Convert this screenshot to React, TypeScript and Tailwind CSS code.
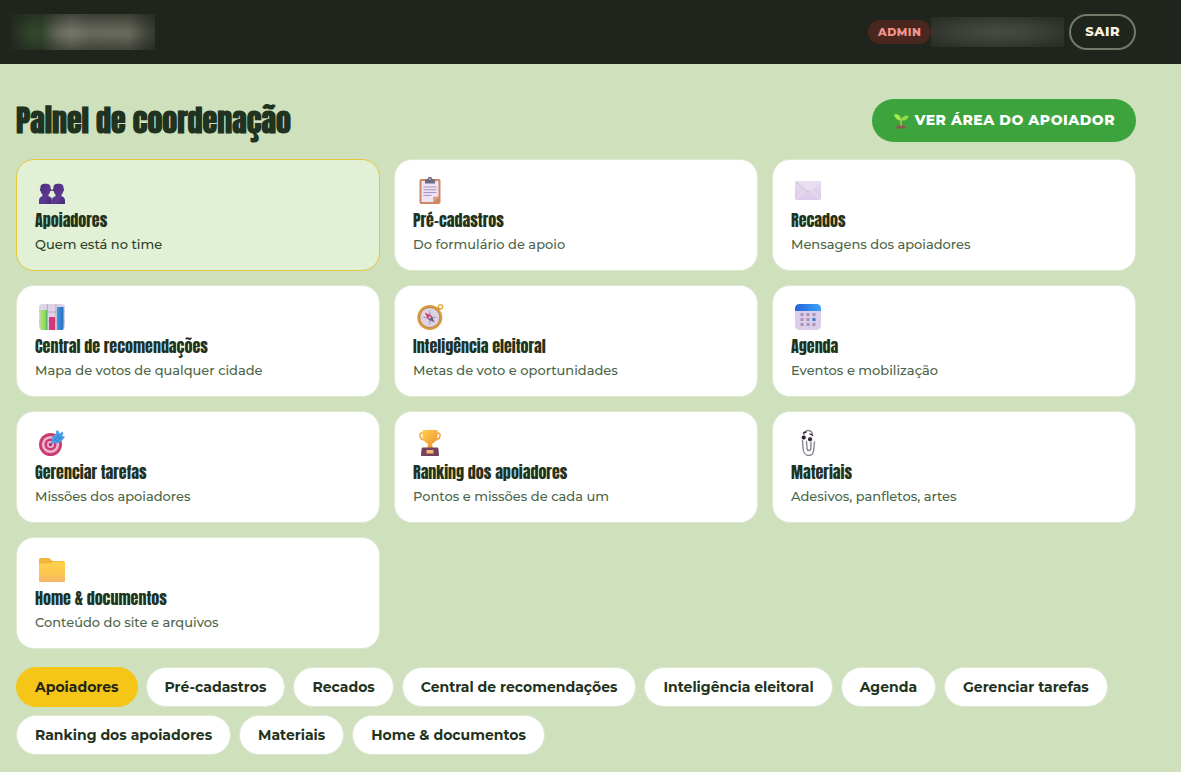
import React, { useState } from 'react';
import clsx from 'clsx';

interface Section {
  id: string;
  title: string;
  description: string;
  icon: React.ReactNode;
}

const PeopleIcon = () => (
  <svg viewBox="0 0 28 28" className="w-7 h-7" aria-hidden="true">
    <defs>
      <linearGradient id="people" x1="0" y1="0" x2="1" y2="1">
        <stop offset="0" stopColor="#4b2f78" />
        <stop offset="0.6" stopColor="#5d3894" />
        <stop offset="1" stopColor="#432a6c" />
      </linearGradient>
    </defs>
    <g fill="url(#people)">
      <path d="M2.400 12.500C2.200 8.800 4 7.800 7.500 7.800s5.300 1 5.100 4.700c.9.200.8 2.500-.3 2.800-.3 1.500-.9 2.600-1.800 3.300v1.600c2.200.5 3.500 2 3.500 4.300v3.500H1v-3.500c0-2.300 1.300-3.800 3.500-4.300v-1.600c-.9-.7-1.500-1.800-1.800-3.300-1-.3-1.200-2.600-.3-2.800z" />
      <path d="M15.400 12.500c-.2-3.700 1.600-4.700 5.100-4.700s5.300 1 5.100 4.700c.9.200.8 2.500-.3 2.800-.3 1.500-.9 2.600-1.800 3.300v1.600c2.200.5 3.500 2 3.500 4.300v3.500H14v-3.500c0-2.300 1.300-3.800 3.500-4.300v-1.600c-.9-.7-1.500-1.800-1.800-3.300-1-.3-1.200-2.600-.3-2.800z" />
    </g>
    <path d="M12 14.200h4" stroke="#4b2f78" strokeWidth="1" />
    <path d="M13.800 27.500v-4c0-1 .3-1.800.8-2.500" fill="none" stroke="#7a58a8" strokeWidth="0.600" />
  </svg>
);

const ClipboardIcon = () => (
  <svg viewBox="0 0 28 28" className="w-7 h-7" aria-hidden="true">
    <rect x="3.500" y="3" width="21" height="25" rx="1.800" fill="#cf8663" />
    <path d="M5.500 5h17v15.500l-5.500 5.500H5.500z" fill="#efe3f6" />
    <path d="M22.500 20.500 17 26v-4a1.500 1.500 0 0 1 1.500-1.500z" fill="#dca184" />
    <path d="M9 7.500V4.600C9 3.700 9.700 3.200 11 3.200c.4 0 .8-.3.900-1C12.200 1.300 13 1 14 1s1.800.3 2.100 1.200c.1.700.5 1 .9 1 1.300 0 2 .5 2 1.400v2.900z" fill="#716a80" />
    <circle cx="14" cy="3" r="0.700" fill="#efe3f6" />
    <path d="M7.500 11h13M7.500 13.800h13M7.500 16.600h13M7.500 19.400h8" stroke="#a592c0" strokeWidth="1" />
  </svg>
);

const EnvelopeIcon = () => (
  <svg viewBox="0 0 28 28" className="w-7 h-7" aria-hidden="true">
    <defs>
      <linearGradient id="envelope" x1="0" y1="0" x2="0" y2="1">
        <stop offset="0" stopColor="#e7dced" />
        <stop offset="1" stopColor="#dcc9ea" />
      </linearGradient>
    </defs>
    <rect x="1" y="5" width="26" height="19" rx="1.500" fill="url(#envelope)" />
    <path d="M1.500 23.500 11 14.500M26.500 23.500 17 14.500" stroke="#f2e9f6" strokeWidth="0.900" />
    <path d="M1.500 5.500 12.300 14.700c1 .8 2.400.8 3.400 0L26.500 5.500" fill="#e9dff0" stroke="#c6b3d2" strokeWidth="0.800" />
    <path d="M16 14.300 26.500 5.500" stroke="#f6eff9" strokeWidth="0.900" />
  </svg>
);

const ChartIcon = () => (
  <svg viewBox="0 0 28 28" className="w-7 h-7" aria-hidden="true">
    <defs>
      <linearGradient id="barGreen" x1="0" y1="0" x2="1" y2="0">
        <stop offset="0" stopColor="#a8e55a" />
        <stop offset="0.700" stopColor="#8fdb60" />
        <stop offset="1" stopColor="#4fae68" />
      </linearGradient>
      <linearGradient id="barBlue" x1="0" y1="0" x2="1" y2="0">
        <stop offset="0" stopColor="#3a9bea" />
        <stop offset="1" stopColor="#2c67b9" />
      </linearGradient>
    </defs>
    <rect x="1" y="2" width="26" height="26" rx="3.500" fill="#ddd3e6" />
    <path d="M1 10h26M1 19h26M9.500 2v26M18 2v26" stroke="#b3a7c0" strokeWidth="0.900" />
    <path d="M2.500 8h6.500v20H4.500c-1.300 0-2-.7-2-2z" fill="url(#barGreen)" />
    <rect x="11" y="15" width="6" height="13" fill="#d83777" />
    <path d="M19 5h6.500v21c0 1.300-.7 2-2 2H19z" fill="url(#barBlue)" />
  </svg>
);

const CompassIcon = () => (
  <svg viewBox="0 0 28 28" className="w-7 h-7" aria-hidden="true">
    <circle cx="24.500" cy="4.800" r="2.200" fill="none" stroke="#e5a83b" strokeWidth="1.300" />
    <path d="m20 9 3-3" stroke="#c98532" strokeWidth="2.500" />
    <circle cx="13.800" cy="15.500" r="12.500" fill="#d99b3e" />
    <circle cx="13.800" cy="15.500" r="10" fill="#ddd3e5" stroke="#b47b43" strokeWidth="0.800" />
    <path d="m13.800 7 1.200 7.200 7.200 1.300-7.200 1.300-1.200 7.200-1.200-7.200-7.200-1.300 7.200-1.300z" fill="#a9a0c0" />
    <path d="m8.800 10.500 6.700 3.300-3.400 3.400z" fill="#d63b6a" />
    <path d="m18.800 20.500-6.700-3.300 3.400-3.400z" fill="#6b6076" />
    <circle cx="13.800" cy="15.500" r="1" fill="#e9e0f0" />
  </svg>
);

const CalendarIcon = () => (
  <svg viewBox="0 0 28 28" className="w-7 h-7" aria-hidden="true">
    <defs>
      <linearGradient id="calendarTop" x1="0" y1="0" x2="1" y2="0">
        <stop offset="0" stopColor="#2764d8" />
        <stop offset="1" stopColor="#39a2fa" />
      </linearGradient>
    </defs>
    <rect x="1" y="2" width="26" height="26" rx="4.500" fill="#dccdea" />
    <path d="M1 9V6.500C1 4 3 2 5.500 2h17C25 2 27 4 27 6.500V9z" fill="url(#calendarTop)" />
    <g fill="#a395b3">
      <rect x="6.500" y="11" width="3" height="3" rx="0.500" />
      <rect x="12.500" y="11" width="3" height="3" rx="0.500" />
      <rect x="18.500" y="11" width="3" height="3" rx="0.500" />
      <rect x="6.500" y="16" width="3" height="3" rx="0.500" />
      <rect x="12.500" y="16" width="3" height="3" rx="0.500" />
      <rect x="6.500" y="21" width="3" height="3" rx="0.500" />
      <rect x="12.500" y="21" width="3" height="3" rx="0.500" />
      <rect x="18.500" y="21" width="3" height="3" rx="0.500" />
    </g>
    <rect x="18.500" y="16" width="3" height="3" rx="0.500" fill="#3478cf" />
  </svg>
);

const TargetIcon = () => (
  <svg viewBox="0 0 28 28" className="w-7 h-7" aria-hidden="true">
    <circle cx="12.500" cy="16.500" r="11.500" fill="#cb3d70" />
    <circle cx="12.500" cy="16.500" r="8.600" fill="#eeb4d2" />
    <circle cx="12.500" cy="16.500" r="6" fill="#cb3d70" />
    <circle cx="12.500" cy="16.500" r="3.500" fill="#eeb4d2" />
    <circle cx="12.500" cy="16.500" r="1.700" fill="#b52f63" />
    <path d="m12.500 16.500 7-7" stroke="#855a9b" strokeWidth="1.400" />
    <path d="m13.500 15.500.8-6.500L18 5.500 18.500 2l2.500 1.500.5 2.500L24 3.500l1.500 2L24 8l3 .5-2 3-3.900 3.500z" fill="#4a9fe8" />
    <path d="m16 12.500 6-6M18.500 13.500l5-4.500" stroke="#1f6fc0" strokeWidth="0.900" />
  </svg>
);

const TrophyIcon = () => (
  <svg viewBox="0 0 28 28" className="w-7 h-7" aria-hidden="true">
    <defs>
      <linearGradient id="trophy" x1="0" y1="0" x2="1" y2="1">
        <stop offset="0" stopColor="#ffcf4a" />
        <stop offset="1" stopColor="#ee9030" />
      </linearGradient>
    </defs>
    <path d="M8 6C5 4 3.500 5.500 4 8s2.500 4 5.500 3.500M20 6c3-2 4.500-.5 4 2s-2.500 4-5.500 3.500" fill="none" stroke="#f0a53a" strokeWidth="1.500" />
    <path d="M6.500 2h15v5.500c0 4-2 7-5.500 8.500l.8 4h-5.600l.8-4c-3.500-1.500-5.500-4.500-5.500-8.500z" fill="url(#trophy)" />
    <path d="M7 19.500h14c.8 0 1.300.4 1.400 1.200L23 27c0 .6-.3 1-1 1H6c-.7 0-1-.4-1-1l.6-6.300c.1-.8.600-1.200 1.400-1.200z" fill="#77405b" />
    <rect x="10.500" y="22" width="7" height="3.500" rx="0.500" fill="#f5ba72" />
  </svg>
);

const PaperclipIcon = () => (
  <svg viewBox="0 0 28 28" className="w-7 h-7" aria-hidden="true">
    <path
      d="M10 7c.5-3 2.500-4.500 4.300-4.500 2.200 0 3.500 1.300 4 3.500M8.500 12.500l.5 7.500c.2 4.500 2.500 7.500 5.700 7.500s4.800-2.500 5-6l.8-7.500M17 14l-.2 6.500c0 1.200-.7 2-1.800 2s-2-.8-2-2.500l-.5-6.500"
      fill="none"
      stroke="#8a858e"
      strokeWidth="1.400"
      strokeLinecap="round"
    />
    <circle cx="10" cy="9.500" r="2.800" fill="#e8e3eb" />
    <circle cx="16.500" cy="11" r="2.800" fill="#e8e3eb" />
    <circle cx="9.700" cy="9.500" r="2" fill="#2b2127" />
    <circle cx="16" cy="11.200" r="2" fill="#2b2127" />
    <path d="M9 5.500c1-1.500 2.500-1.700 3.500-1M15.500 6.200c1.500-.2 2.800.600 3.300 1.800" fill="none" stroke="#2b2127" strokeWidth="1.300" />
  </svg>
);

const FolderIcon = () => (
  <svg viewBox="0 0 28 28" className="w-7 h-7" aria-hidden="true">
    <defs>
      <linearGradient id="folder" x1="0" y1="0" x2="0" y2="1">
        <stop offset="0" stopColor="#ffd24d" />
        <stop offset="0.600" stopColor="#fcc650" />
        <stop offset="1" stopColor="#f6b56c" />
      </linearGradient>
    </defs>
    <path d="M1 6c0-1.200.8-2 2-2h7.500c.8 0 1.300.3 1.800.9L14.500 7H25c1.200 0 2 .8 2 2v4H1z" fill="#f2b63f" />
    <path d="M1 11c0-1 .5-1.500 1.500-1.500h9.500c1 0 1.500-.3 2-.8s1-.7 1.800-.7h9.700c1 0 1.500.5 1.500 1.500v17c0 1-.5 1.500-1.500 1.500h-23c-1 0-1.500-.5-1.500-1.500z" fill="url(#folder)" />
  </svg>
);

const SeedlingIcon = () => (
  <svg viewBox="0 0 16 16" className="w-4 h-4" aria-hidden="true">
    <path d="M3 15.500c.3-2.500 2.500-4 5-4s4.700 1.500 5 4z" fill="#8a5a54" />
    <path d="M8 13V8c0-1.500 1-2.500 2.500-3" fill="none" stroke="#8ccf45" strokeWidth="1.600" />
    <path d="M8 7.500C5 7.500 2 5.500 1 1.500c3.500-.8 7 1 7 6z" fill="#a6e650" />
    <path d="M8.500 7.500C9 3.500 12 2 15.500 2.700c-.2 3.300-3 5.300-7 4.800z" fill="#93da48" />
  </svg>
);

const sections: Section[] = [
  { id: 'apoiadores', title: 'Apoiadores', description: 'Quem está no time', icon: <PeopleIcon /> },
  { id: 'pre-cadastros', title: 'Pré-cadastros', description: 'Do formulário de apoio', icon: <ClipboardIcon /> },
  { id: 'recados', title: 'Recados', description: 'Mensagens dos apoiadores', icon: <EnvelopeIcon /> },
  { id: 'central', title: 'Central de recomendações', description: 'Mapa de votos de qualquer cidade', icon: <ChartIcon /> },
  { id: 'inteligencia', title: 'Inteligência eleitoral', description: 'Metas de voto e oportunidades', icon: <CompassIcon /> },
  { id: 'agenda', title: 'Agenda', description: 'Eventos e mobilização', icon: <CalendarIcon /> },
  { id: 'tarefas', title: 'Gerenciar tarefas', description: 'Missões dos apoiadores', icon: <TargetIcon /> },
  { id: 'ranking', title: 'Ranking dos apoiadores', description: 'Pontos e missões de cada um', icon: <TrophyIcon /> },
  { id: 'materiais', title: 'Materiais', description: 'Adesivos, panfletos, artes', icon: <PaperclipIcon /> },
  { id: 'home', title: 'Home & documentos', description: 'Conteúdo do site e arquivos', icon: <FolderIcon /> },
];

const App: React.FC = () => {
  const [active, setActive] = useState('apoiadores');

  return (
    <div className="min-h-screen bg-[#cee0bc] font-[Montserrat,Inter,sans-serif] text-[#1f3320]">
      <header className="bg-[#1f241c]">
        <div className="flex h-16 max-w-[1136px] items-center justify-between pl-[10px]">
          <div className="h-9 w-[145px] bg-[linear-gradient(to_bottom,#1f241c99_0%,transparent_45%,transparent_60%,#1f241c88_100%),linear-gradient(to_right,#23281f_0%,#30462a_14%,#33452d_22%,#62645a_33%,#747569_42%,#65665a_55%,#66675b_82%,#45483f_93%,#34382f_100%)]" />
          <div className="flex items-center">
            <span className="rounded-full bg-[#4a271e] px-[10px] text-[11px] leading-6 font-extrabold tracking-[0.5px] text-[#f2938c]">ADMIN</span>
            <div className="h-[30px] w-[133px] bg-[radial-gradient(ellipse_at_center,#484b42_0%,#3f4239_35%,#262b23_100%)]" />
            <button type="button" className="ml-[5px] h-9 rounded-full border-2 border-[#77786c] px-[14px] text-[13px] font-extrabold tracking-[0.5px] text-[#f7f0dc]">
              SAIR
            </button>
          </div>
        </div>
      </header>

      <main className="max-w-[1152px] px-4 pt-[35px] pb-4">
        <div className="mb-[17px] flex items-center justify-between">
          <h1 className="font-[Anton,'Liberation_Sans_Narrow',sans-serif] text-[30px] leading-10 font-bold">Painel de coordenação</h1>
          <a href="#apoiador" className="flex h-[43px] items-center gap-[6px] rounded-full bg-[#3da33c] px-[21px] text-[14px] font-extrabold tracking-[0.5px] text-white">
            <SeedlingIcon />
            VER ÁREA DO APOIADOR
          </a>
        </div>

        <div className="mb-[18px] grid grid-cols-3 gap-[14px]">
          {sections.map(section => (
            <button
              key={section.id}
              type="button"
              onClick={() => setActive(section.id)}
              className={clsx(
                'rounded-[18px] border px-[18px] py-4 text-left',
                active === section.id ? 'border-[#e6c63c] bg-[#e2f0d6]' : 'border-[#dde8d2] bg-white'
              )}
            >
              <span className="mb-1 ml-[3px] block">{section.icon}</span>
              <span className="block font-[Anton,'Liberation_Sans_Narrow',sans-serif] text-[16px] leading-6">{section.title}</span>
              <span className={clsx('mt-[2px] block text-[13px] leading-5 font-medium', active === section.id ? 'text-[#2b3f29]' : 'text-[#4c6548]')}>
                {section.description}
              </span>
            </button>
          ))}
        </div>

        <nav className="flex flex-wrap gap-2">
          {sections.map(section => (
            <button
              key={section.id}
              type="button"
              onClick={() => setActive(section.id)}
              className={clsx(
                'h-10 rounded-full border px-[18px] text-[14px] font-bold',
                active === section.id ? 'border-[#f5c518] bg-[#f5c518] text-[#242414]' : 'border-[#dde8d2] bg-white'
              )}
            >
              {section.title}
            </button>
          ))}
        </nav>
      </main>
    </div>
  );
};

export default App;
